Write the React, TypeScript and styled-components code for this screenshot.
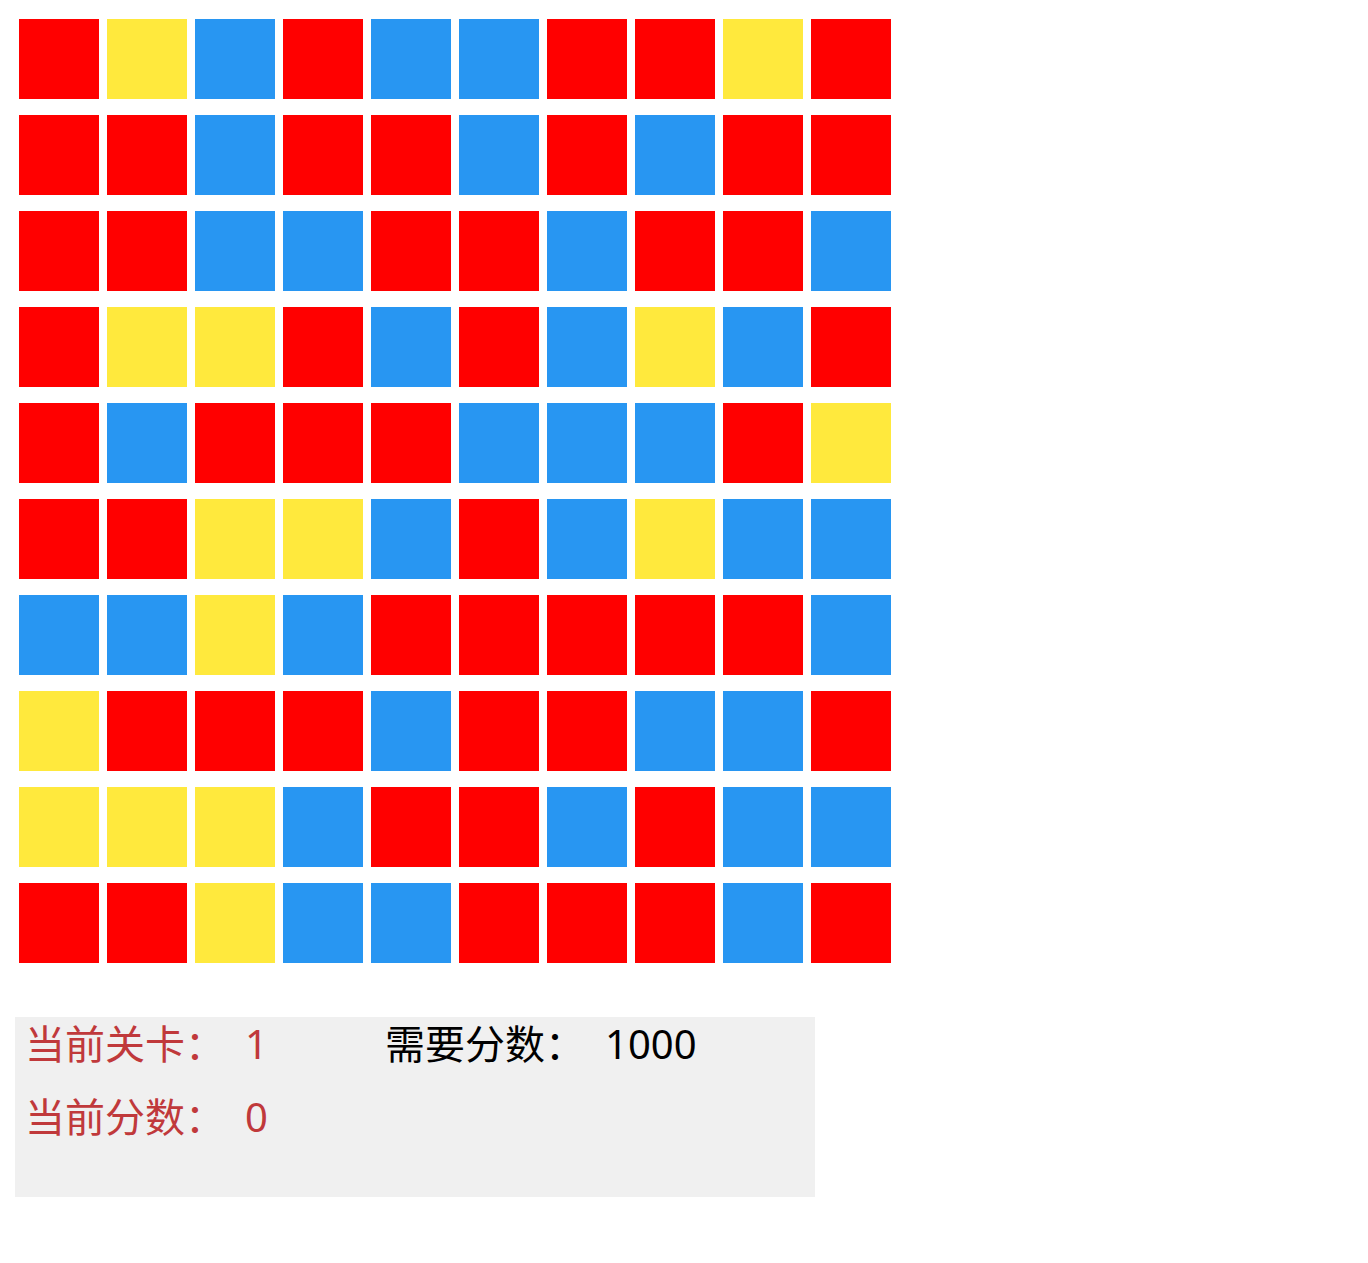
import styled, { createGlobalStyle } from 'styled-components'

const GlobalStyle = createGlobalStyle`
  body {
    margin: 0;
    background: #ffffff;
    font-family: "Noto Sans", "Noto Sans CJK SC", sans-serif;
  }
`

const colors = {
  R: '#ff0000',
  Y: '#ffe93d',
  B: '#2896f2'
}

type Tone = keyof typeof colors

const rows: string[] = [
  'RYBRBBRRYR',
  'RRBRRBRBRR',
  'RRBBRRBRRB',
  'RYYRBRBYBR',
  'RBRRRBBBRY',
  'RRYYBRBYBB',
  'BBYBRRRRRB',
  'YRRRBRRBBR',
  'YYYBRRBRBB',
  'RRYBBRRRBR'
]

const Page = styled.div`
  padding: 19px 0 0 15px;
`

const Board = styled.div`
  display: grid;
  grid-template-columns: repeat(10, 80px);
  grid-auto-rows: 80px;
  gap: 16px 8px;
  margin-left: 4px;
`

const Cell = styled.div<{ $tone: Tone }>`
  background: ${({ $tone }) => colors[$tone]};
`

const Panel = styled.div`
  margin-top: 54px;
  width: 800px;
  height: 180px;
  box-sizing: border-box;
  background: #f0f0f0;
  padding-left: 10px;
  display: grid;
  grid-template-columns: 360px 360px;
  grid-auto-rows: 54px;
  row-gap: 19px;
  align-content: start;
`

const Stat = styled.div<{ $dark?: boolean }>`
  display: flex;
  gap: 20px;
  font-size: 40px;
  line-height: 54px;
  color: ${({ $dark }) => ($dark ? '#000000' : '#c0393b')};
  white-space: nowrap;
`

export default function App() {
  return (
    <Page>
      <GlobalStyle />
      <Board>
        {rows.flatMap((row, r) =>
          row.split('').map((t, c) => <Cell key={`${r}-${c}`} $tone={t as Tone} />)
        )}
      </Board>
      <Panel>
        <Stat>
          <span>当前关卡：</span>
          <span>1</span>
        </Stat>
        <Stat $dark>
          <span>需要分数：</span>
          <span>1000</span>
        </Stat>
        <Stat>
          <span>当前分数：</span>
          <span>0</span>
        </Stat>
      </Panel>
    </Page>
  )
}
